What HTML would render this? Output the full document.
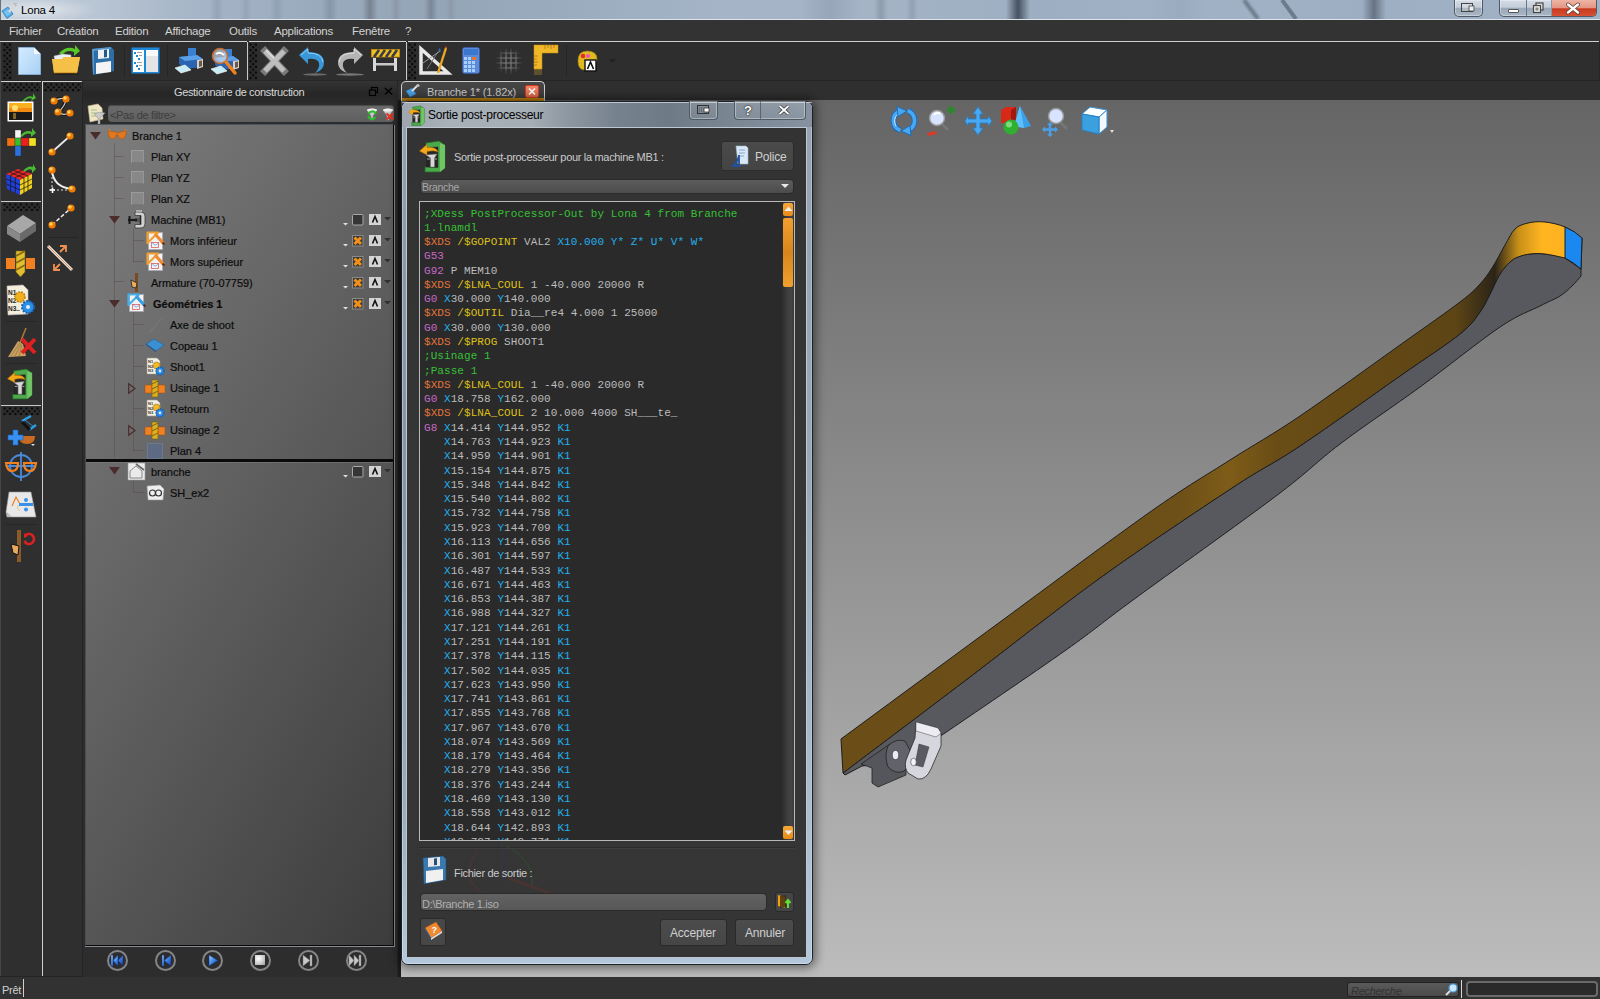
<!DOCTYPE html><html><head><meta charset="utf-8"><style>
*{margin:0;padding:0;box-sizing:border-box}
html,body{width:1600px;height:999px;overflow:hidden;background:#2f2f2f;font-family:"Liberation Sans",sans-serif;font-size:11px;color:#ccc}
.a{position:absolute}
svg{position:absolute;overflow:visible}
.t{position:absolute;white-space:nowrap;letter-spacing:-0.35px;line-height:13px;margin-top:1px}
#title{left:0;top:0;width:1600px;height:20px;background:linear-gradient(90deg,#c4ced9 0%,#b8c5d3 6%,#a6b5c7 12%,#9aaabd 20%,#95a5b8 28%,#9cacbf 36%,#a5b4c7 45%,#a4b3c6 55%,#9eaec2 65%,#a2b2c6 75%,#9daec3 85%,#a2b2c6 100%)}
#menu{left:0;top:20px;width:1600px;height:21px;background:#333}
#tb{left:0;top:42px;width:1600px;height:39px;background:#2e2e2e}
#vp{left:400px;top:100px;width:1200px;height:877px;background:linear-gradient(180deg,#656565 0%,#bcbcbc 100%)}
#status{left:0;top:977px;width:1600px;height:22px;background:#323232}
.mono{font-family:"Liberation Mono",monospace;font-size:11px;letter-spacing:0.07px}
.grip{background-image:radial-gradient(circle at 50% 50%,#080808 1px,transparent 1.6px),radial-gradient(circle at 50% 50%,#080808 1px,transparent 1.6px);background-size:5.5px 5.6px;background-position:-1.25px -1.3px,1.5px 1.5px}
</style></head><body>
<div id="title" class="a"></div>
<div class="a" style="left:210px;top:0;width:14px;height:19px;background:linear-gradient(90deg,transparent,rgba(120,135,155,.35),transparent)"></div>
<div class="a" style="left:240px;top:0;width:12px;height:19px;background:linear-gradient(90deg,transparent,rgba(120,135,155,.3),transparent)"></div>
<div class="a" style="left:270px;top:0;width:14px;height:19px;background:linear-gradient(90deg,transparent,rgba(120,135,155,.35),transparent)"></div>
<div class="a" style="left:322px;top:0;width:16px;height:19px;background:linear-gradient(90deg,transparent,rgba(110,125,145,.45),transparent)"></div>
<div class="a" style="left:362px;top:0;width:16px;height:19px;background:linear-gradient(90deg,transparent,rgba(100,105,115,.6),transparent)"></div>
<div class="a" style="left:390px;top:0;width:12px;height:19px;background:linear-gradient(90deg,transparent,rgba(120,130,145,.4),transparent)"></div>
<div class="a" style="left:424px;top:0;width:14px;height:19px;background:linear-gradient(90deg,transparent,rgba(100,110,125,.55),transparent)"></div>
<div class="a" style="left:446px;top:0;width:10px;height:19px;background:linear-gradient(90deg,transparent,rgba(120,130,145,.35),transparent)"></div>
<div class="a" style="left:800px;top:0;width:60px;height:19px;background:linear-gradient(90deg,transparent,rgba(120,135,155,.3),transparent)"></div>
<div class="a" style="left:874px;top:0;width:14px;height:19px;background:linear-gradient(90deg,transparent,rgba(110,120,135,.4),transparent)"></div>
<div class="a" style="left:906px;top:0;width:12px;height:19px;background:linear-gradient(90deg,transparent,rgba(120,130,145,.35),transparent)"></div>
<div class="a" style="left:1006px;top:0;width:24px;height:19px;background:linear-gradient(90deg,transparent,rgba(55,65,80,.85),transparent)"></div>
<div class="a" style="left:1362px;top:0;width:24px;height:19px;background:linear-gradient(90deg,transparent,rgba(80,90,105,.7),transparent)"></div>
<div class="a" style="left:1150px;top:0;width:60px;height:19px;background:linear-gradient(90deg,transparent,rgba(130,145,165,.2),transparent)"></div>
<svg style="left:1236px;top:0" width="70" height="19"><path d="M8 0 L22 19" stroke="rgba(70,80,95,.55)" stroke-width="4" filter="blur(0.8px)"/><path d="M46 0 L60 19" stroke="rgba(70,80,95,.55)" stroke-width="4"/></svg>
<div class="a" style="left:0;top:19px;width:1600px;height:1px;background:#dde4ec"></div>
<div class="a" style="left:0;top:0;width:120px;height:19px;background:radial-gradient(ellipse 60px 12px at 38px 10px,rgba(235,238,242,.75),rgba(235,238,242,0))"></div>
<div class="a" style="left:0;top:0;width:1px;height:20px;background:#6a7078"></div>
<div class="t" style="left:21px;top:3px;color:#000;font-size:11.5px;letter-spacing:-0.2px">Lona 4</div>
<svg style="left:1px;top:2px" width="17" height="17"><path d="M1 9 L7 5 L12 12 L6 16.5 Z" fill="#58b0e8" stroke="#2a78b8" stroke-width="0.8"/><path d="M3 10 L7 7 L10 11 L6 14 Z" fill="#90d0f8" opacity=".6"/><path d="M8 10 L14 3" stroke="#d8d8d8" stroke-width="2.6"/><path d="M12 1 L16 1 L15 5 Z" fill="#bbb"/></svg>
<div class="a" style="left:1454px;top:0;width:29px;height:17px;border:1px solid #505a66;border-top:none;border-radius:0 0 5px 5px;background:linear-gradient(#d4dce6 0%,#c4ced8 45%,#9aa8b8 52%,#a8b6c6 100%);box-shadow:inset 0 0 0 1px rgba(255,255,255,.35)"></div>
<svg style="left:1461px;top:3px" width="16" height="11"><rect x="0.5" y="0.5" width="11" height="8" fill="rgba(255,255,255,.2)" stroke="#444" stroke-width="1"/><rect x="8" y="3" width="5" height="5" fill="#eee" stroke="#444" stroke-width="0.8"/></svg>
<div class="a" style="left:1499px;top:0;width:98px;height:17px;border:1px solid #505a66;border-top:none;border-radius:0 0 5px 5px;overflow:hidden;background:linear-gradient(#d4dce6 0%,#c4ced8 45%,#9aa8b8 52%,#a8b6c6 100%);box-shadow:inset 0 0 0 1px rgba(255,255,255,.35)"><div class="a" style="left:26px;top:0;width:1px;height:17px;background:#6a7888"></div><div class="a" style="left:51px;top:0;width:1px;height:17px;background:#8a98a8"></div><div class="a" style="left:52px;top:0;width:46px;height:17px;background:linear-gradient(#eeb4a4 0%,#e49684 45%,#c83a22 52%,#d85434 100%)"></div></div>
<div class="a" style="left:1508px;top:9px;width:11px;height:4px;background:#fff;border:1px solid #555;border-radius:1px"></div>
<svg style="left:1532px;top:2px" width="13" height="12"><rect x="4" y="1" width="7" height="7" fill="#e8e8e8" stroke="#444" stroke-width="1.2"/><rect x="1.5" y="3.5" width="7" height="7" fill="#e8e8e8" stroke="#444" stroke-width="1.2"/><rect x="3.5" y="5.5" width="3" height="3" fill="#888"/></svg>
<svg style="left:1565px;top:3px" width="16" height="11"><path d="M3 1.5 L13 9.5 M13 1.5 L3 9.5" stroke="#5a3a30" stroke-width="4" stroke-linecap="round"/><path d="M3 1.5 L13 9.5 M13 1.5 L3 9.5" stroke="#fff" stroke-width="2.4" stroke-linecap="round"/></svg>
<div id="menu" class="a"></div>
<div class="t" style="left:9px;top:24px;color:#d2d2d2;font-size:11.5px;letter-spacing:-0.25px">Fichier</div>
<div class="t" style="left:57px;top:24px;color:#d2d2d2;font-size:11.5px;letter-spacing:-0.25px">Création</div>
<div class="t" style="left:115px;top:24px;color:#d2d2d2;font-size:11.5px;letter-spacing:-0.25px">Edition</div>
<div class="t" style="left:165px;top:24px;color:#d2d2d2;font-size:11.5px;letter-spacing:-0.25px">Affichage</div>
<div class="t" style="left:229px;top:24px;color:#d2d2d2;font-size:11.5px;letter-spacing:-0.25px">Outils</div>
<div class="t" style="left:274px;top:24px;color:#d2d2d2;font-size:11.5px;letter-spacing:-0.25px">Applications</div>
<div class="t" style="left:352px;top:24px;color:#d2d2d2;font-size:11.5px;letter-spacing:-0.25px">Fenêtre</div>
<div class="t" style="left:405px;top:24px;color:#d2d2d2;font-size:11.5px;letter-spacing:-0.25px">?</div>
<div class="a" style="left:0;top:41px;width:1599px;height:1px;background:#cfcfcf"></div>
<div id="tb" class="a"></div>
<div class="a" style="left:0;top:80px;width:1600px;height:1px;background:#262626"></div>
<div class="a" style="left:1599px;top:42px;width:1px;height:39px;background:#262626"></div>
<div class="a" style="left:0;top:42px;width:1px;height:935px;background:#454545"></div>
<div class="a grip" style="left:3px;top:43px;width:9px;height:37px"></div>
<div class="a" style="left:1px;top:81px;width:40px;height:1px;background:#d0d0d0"></div>
<div class="a" style="left:42px;top:81px;width:40px;height:1px;background:#d0d0d0"></div>
<div class="a" style="left:42px;top:81px;width:1px;height:895px;background:#d0d0d0"></div>
<div class="a" style="left:82px;top:82px;width:1px;height:894px;background:#242424"></div>
<div class="a" style="left:0;top:976px;width:83px;height:1px;background:#242424"></div>
<div class="a grip" style="left:3px;top:83px;width:37px;height:9px"></div>
<div class="a grip" style="left:44px;top:83px;width:37px;height:9px"></div>
<div class="a" style="left:83px;top:81px;width:315px;height:896px;background:#2d2d2d"></div>
<div class="a" style="left:83px;top:81px;width:315px;height:22px;background:linear-gradient(#343434,#262626 60%,#2b2b2b)"></div>
<div class="a" style="left:397px;top:81px;width:1px;height:896px;background:#262626"></div>
<div class="t" style="left:174px;top:85px;color:#d8d8d8">Gestionnaire de construction</div>
<svg style="left:369px;top:87px" width="9" height="9"><rect x="2.5" y="0.5" width="6" height="5" fill="none" stroke="#000" stroke-width="1.2"/><rect x="0.5" y="3" width="6" height="5.5" fill="#2a2a2a" stroke="#000" stroke-width="1.2"/></svg>
<svg style="left:384px;top:87px" width="9" height="8"><path d="M1 1 L8 7.5 M8 1 L1 7.5" stroke="#000" stroke-width="1.4"/></svg>
<svg style="left:87px;top:103px" width="19" height="21"><path d="M1 3 L11 1 L15 5 L16 16 L3 19 Z" fill="#f0e6c4" stroke="#c8b890" stroke-width="0.6"/><path d="M4 7h6M4 10h6M4 13h6" stroke="#8ab878" stroke-width="0.8"/><path d="M7 11 Q12 8 18 10 L13 15 L13 21 L11 21 L11 15 Z" fill="#c8c8c8" stroke="#888" stroke-width="0.5"/></svg>
<div class="a" style="left:108px;top:105px;width:286px;height:17px;border-radius:4px;background:linear-gradient(#6c6c6c,#5e5e5e);box-shadow:inset 0 1px 1px #4a4a4a"></div>
<div class="t" style="left:110px;top:108px;color:#3e3e3e">&lt;Pas de filtre&gt;</div>
<svg style="left:366px;top:107px" width="12" height="14"><path d="M1 3 Q6 0 11 3 L7 9 L7 13 L5 13 L5 9 Z" fill="#c8c8c8" stroke="#888" stroke-width="0.5"/><ellipse cx="6" cy="3" rx="5" ry="1.6" fill="#f0f0f0"/><path d="M2.5 7 A4 4 0 0 1 9.5 6" stroke="#28c028" stroke-width="2" fill="none"/><path d="M9.5 10 A4 4 0 0 1 2.5 10" stroke="#28c028" stroke-width="2" fill="none"/><path d="M8 4 L11 6 L8.5 8 Z M4 12 L1 10 L3.5 8 Z" fill="#28c028"/></svg>
<svg style="left:382px;top:107px" width="12" height="14"><path d="M1 3 Q6 0 11 3 L7 9 L7 13 L5 13 L5 9 Z" fill="#c8c8c8" stroke="#888" stroke-width="0.5"/><ellipse cx="6" cy="3" rx="5" ry="1.6" fill="#f0f0f0"/><path d="M4.5 6.5 L11 12.5 M11 6.5 L4.5 12.5" stroke="#e83020" stroke-width="2"/></svg>
<div class="a" style="left:85px;top:124px;width:309px;height:822px;border:1px solid #080808;border-top-color:#4f555c;border-left-color:#4a4f55;background:linear-gradient(120deg,#7e7e7e 0%,#6a6a6a 30%,#555 62%,#3c3c3c 100%)"></div>
<div class="a" style="left:86px;top:459px;width:307px;height:3px;background:#0a0a0a"></div>
<div class="a" style="left:86px;top:462px;width:307px;height:1px;background:#8a8a8a;opacity:.4"></div>
<div class="a" style="left:85px;top:946px;width:310px;height:1px;background:#868a92"></div>
<div class="a" style="left:394px;top:125px;width:1px;height:822px;background:#868a92"></div>
<div class="a" style="left:107.2px;top:949.5px;width:21px;height:21px;border-radius:50%;border:2px solid #858585"></div>
<div class="a" style="left:155.2px;top:949.5px;width:21px;height:21px;border-radius:50%;border:2px solid #858585"></div>
<div class="a" style="left:202.3px;top:949.5px;width:21px;height:21px;border-radius:50%;border:2px solid #858585"></div>
<div class="a" style="left:249.8px;top:949.5px;width:21px;height:21px;border-radius:50%;border:2px solid #858585"></div>
<div class="a" style="left:297.8px;top:949.5px;width:21px;height:21px;border-radius:50%;border:2px solid #858585"></div>
<div class="a" style="left:345.5px;top:949.5px;width:21px;height:21px;border-radius:50%;border:2px solid #858585"></div>
<svg style="left:109px;top:953px" width="17" height="15"><defs><linearGradient id="mb" x1="0" y1="0" x2="1" y2="1"><stop offset="0" stop-color="#a8d8ff"/><stop offset=".5" stop-color="#3a8ae8"/><stop offset="1" stop-color="#1a3aa0"/></linearGradient></defs><path d="M2 2 L4 2 L4 13 L2 13 Z M4 7.5 L9 2 L9 13 Z M9 7.5 L14 2 L14 13 Z" fill="url(#mb)" stroke="#1a2a80" stroke-width="0.5"/></svg>
<svg style="left:160px;top:953px" width="13" height="15"><path d="M2 2 L4 2 L4 13 L2 13 Z M4 7.5 L11 2 L11 13 Z" fill="url(#mb)" stroke="#1a2a80" stroke-width="0.5"/></svg>
<svg style="left:207px;top:954px" width="13" height="13"><path d="M2 1 L11 6.5 L2 12 Z" fill="url(#mb)" stroke="#1a2a80" stroke-width="0.5"/></svg>
<div class="a" style="left:255px;top:955px;width:10px;height:10px;background:radial-gradient(circle at 35% 35%,#fff,#c8c8c8 60%,#9a9a9a)"></div>
<svg style="left:302px;top:953px" width="13" height="15"><path d="M1 2 L8 7.5 L1 13 Z M8 2 L10 2 L10 13 L8 13 Z" fill="#c8c8c8" stroke="#777" stroke-width="0.5"/></svg>
<svg style="left:348px;top:953px" width="17" height="15"><path d="M1 2 L6 7.5 L1 13 Z M6 2 L11 7.5 L6 13 Z M11 2 L13 2 L13 13 L11 13 Z" fill="#c8c8c8" stroke="#777" stroke-width="0.5"/></svg>
<div class="a" style="left:114px;top:143px;width:1px;height:315px;background:rgba(90,70,70,.45)"></div>
<div class="a" style="left:133px;top:228px;width:1px;height:34px;background:rgba(90,70,70,.45)"></div>
<div class="a" style="left:133px;top:312px;width:1px;height:140px;background:rgba(90,70,70,.45)"></div>
<div class="a" style="left:133px;top:480px;width:1px;height:13px;background:rgba(90,70,70,.45)"></div>
<div class="a" style="left:114px;top:156px;width:10px;height:1px;background:rgba(90,70,70,.45)"></div>
<div class="a" style="left:114px;top:177px;width:10px;height:1px;background:rgba(90,70,70,.45)"></div>
<div class="a" style="left:114px;top:198px;width:10px;height:1px;background:rgba(90,70,70,.45)"></div>
<div class="a" style="left:114px;top:281px;width:10px;height:1px;background:rgba(90,70,70,.45)"></div>
<div class="a" style="left:133px;top:240px;width:11px;height:1px;background:rgba(90,70,70,.45)"></div>
<div class="a" style="left:133px;top:261px;width:11px;height:1px;background:rgba(90,70,70,.45)"></div>
<div class="a" style="left:133px;top:324px;width:11px;height:1px;background:rgba(90,70,70,.45)"></div>
<div class="a" style="left:133px;top:345px;width:11px;height:1px;background:rgba(90,70,70,.45)"></div>
<div class="a" style="left:133px;top:366px;width:11px;height:1px;background:rgba(90,70,70,.45)"></div>
<div class="a" style="left:133px;top:408px;width:11px;height:1px;background:rgba(90,70,70,.45)"></div>
<div class="a" style="left:133px;top:450px;width:11px;height:1px;background:rgba(90,70,70,.45)"></div>
<div class="a" style="left:133px;top:492px;width:11px;height:1px;background:rgba(90,70,70,.45)"></div>
<svg style="left:90px;top:132px" width="12" height="8"><path d="M0 0 L11 0 L5.5 7.5 Z" fill="#4a2c2c"/></svg>
<svg style="left:107px;top:129px" width="20" height="13"><path d="M1 4 Q0 2 3 2 L9 3 L11 4 L13 3 L18 2 Q20 2 19 5 Q18 10 14 10 Q11 10 11 6 L9 6 Q9 10 5 10 Q2 10 1 4 Z" fill="#e07820" stroke="#b05010" stroke-width="0.6"/><path d="M3 2 L2 0 M18 2 L19 0" stroke="#e07820" stroke-width="1.2"/></svg>
<div class="t" style="left:132px;top:129px;color:#0c0c0c;-webkit-text-stroke:0.2px #0c0c0c;letter-spacing:-0.02px;">Branche 1</div>
<div class="a" style="left:131px;top:150px;width:13px;height:13px;background:#8a8a8a;border-top:1px solid #a0a0a0;border-left:1px solid #a0a0a0;border-right:1px solid #9a9a9a;border-bottom:1px solid #7a7a7a;opacity:.9"></div>
<div class="t" style="left:151px;top:150px;color:#0c0c0c;-webkit-text-stroke:0.2px #0c0c0c;letter-spacing:-0.02px;">Plan XY</div>
<div class="a" style="left:131px;top:171px;width:13px;height:13px;background:#8a8a8a;border-top:1px solid #a0a0a0;border-left:1px solid #a0a0a0;border-right:1px solid #9a9a9a;border-bottom:1px solid #7a7a7a;opacity:.9"></div>
<div class="t" style="left:151px;top:171px;color:#0c0c0c;-webkit-text-stroke:0.2px #0c0c0c;letter-spacing:-0.02px;">Plan YZ</div>
<div class="a" style="left:131px;top:192px;width:13px;height:13px;background:#8a8a8a;border-top:1px solid #a0a0a0;border-left:1px solid #a0a0a0;border-right:1px solid #9a9a9a;border-bottom:1px solid #7a7a7a;opacity:.9"></div>
<div class="t" style="left:151px;top:192px;color:#0c0c0c;-webkit-text-stroke:0.2px #0c0c0c;letter-spacing:-0.02px;">Plan XZ</div>
<svg style="left:109px;top:216px" width="12" height="8"><path d="M0 0 L11 0 L5.5 7.5 Z" fill="#4a2c2c"/></svg>
<svg style="left:127px;top:210px" width="19" height="20"><path d="M8 2 L14 2 Q18 2 18 6 L18 14 Q18 18 14 18 L8 18 L8 14.5 L13.5 14.5 L13.5 5.5 L8 5.5 Z" fill="#cfcfd2" stroke="#3a3a3a" stroke-width="0.8"/><path d="M13.5 5.5 L13.5 14.5" stroke="#222" stroke-width="1.6"/><rect x="8" y="8" width="5" height="4" fill="#555"/><path d="M1 10 L10 10" stroke="#1a1a1a" stroke-width="2.2"/><path d="M2.5 6 L2.5 14" stroke="#1a1a1a" stroke-width="2"/><path d="M9 1 L15 1" stroke="#eee" stroke-width="1"/></svg>
<div class="t" style="left:151px;top:213px;color:#0c0c0c;-webkit-text-stroke:0.2px #0c0c0c;letter-spacing:-0.02px;">Machine (MB1)</div>
<svg style="left:343px;top:223px" width="6" height="3"><path d="M0 0 L5 0 L2.5 2.5 Z" fill="#e0e0e0"/></svg>
<svg style="left:352px;top:214px" width="12" height="12"><rect x="0.5" y="0.5" width="10.5" height="10.5" rx="1" fill="#363636" stroke="#a8a8a8"/></svg>
<svg style="left:369px;top:214px" width="13" height="12"><rect x="0" y="0" width="12" height="11" fill="#d4d4d4"/><path d="M3.5 8.5 L6 2.5 L8.5 8.5" stroke="#111" stroke-width="1.6" fill="none"/></svg>
<svg style="left:384px;top:217px" width="8" height="5"><path d="M0 0 L7 0 L3.5 3.5 Z" fill="#303030"/></svg>
<svg style="left:146px;top:231px" width="20" height="20"><rect x="2.5" y="1.5" width="14" height="17" fill="#f2f2f4" stroke="#a8a8b0" stroke-width="0.8"/><path d="M6 11 Q9 17 13 11" stroke="#80b0e0" stroke-width="1" fill="none"/><rect x="5.5" y="11.5" width="7" height="5" fill="none" stroke="#d86060" stroke-width="0.8"/><path d="M1.5 1.5 L12 1.5 L1.5 12 Z" fill="none" stroke="#f0a030" stroke-width="2.2" stroke-linejoin="round"/><path d="M3.5 3.5 L8 3.5 L3.5 8 Z" fill="#f8f0e0" opacity=".6"/><path d="M9 3 L17.5 12.5" stroke="#f08a30" stroke-width="3.2"/><path d="M16.5 11.5 L18.5 13.5" stroke="#603010" stroke-width="2"/></svg>
<div class="t" style="left:170px;top:234px;color:#0c0c0c;-webkit-text-stroke:0.2px #0c0c0c;letter-spacing:-0.02px;">Mors inférieur</div>
<svg style="left:343px;top:244px" width="6" height="3"><path d="M0 0 L5 0 L2.5 2.5 Z" fill="#e0e0e0"/></svg>
<svg style="left:352px;top:235px" width="12" height="12"><rect x="0.5" y="0.5" width="10.5" height="10.5" fill="#3a3a3a" stroke="#8a8a8a"/><path d="M2.5 2.5 L9 9 M9 2.5 L2.5 9" stroke="#f0901a" stroke-width="3"/></svg>
<svg style="left:369px;top:235px" width="13" height="12"><rect x="0" y="0" width="12" height="11" fill="#d4d4d4"/><path d="M3.5 8.5 L6 2.5 L8.5 8.5" stroke="#111" stroke-width="1.6" fill="none"/></svg>
<svg style="left:384px;top:238px" width="8" height="5"><path d="M0 0 L7 0 L3.5 3.5 Z" fill="#303030"/></svg>
<svg style="left:146px;top:252px" width="20" height="20"><rect x="2.5" y="1.5" width="14" height="17" fill="#f2f2f4" stroke="#a8a8b0" stroke-width="0.8"/><path d="M6 11 Q9 17 13 11" stroke="#80b0e0" stroke-width="1" fill="none"/><rect x="5.5" y="11.5" width="7" height="5" fill="none" stroke="#d86060" stroke-width="0.8"/><path d="M1.5 1.5 L12 1.5 L1.5 12 Z" fill="none" stroke="#f0a030" stroke-width="2.2" stroke-linejoin="round"/><path d="M3.5 3.5 L8 3.5 L3.5 8 Z" fill="#f8f0e0" opacity=".6"/><path d="M9 3 L17.5 12.5" stroke="#f08a30" stroke-width="3.2"/><path d="M16.5 11.5 L18.5 13.5" stroke="#603010" stroke-width="2"/></svg>
<div class="t" style="left:170px;top:255px;color:#0c0c0c;-webkit-text-stroke:0.2px #0c0c0c;letter-spacing:-0.02px;">Mors supérieur</div>
<svg style="left:343px;top:265px" width="6" height="3"><path d="M0 0 L5 0 L2.5 2.5 Z" fill="#e0e0e0"/></svg>
<svg style="left:352px;top:256px" width="12" height="12"><rect x="0.5" y="0.5" width="10.5" height="10.5" fill="#3a3a3a" stroke="#8a8a8a"/><path d="M2.5 2.5 L9 9 M9 2.5 L2.5 9" stroke="#f0901a" stroke-width="3"/></svg>
<svg style="left:369px;top:256px" width="13" height="12"><rect x="0" y="0" width="12" height="11" fill="#d4d4d4"/><path d="M3.5 8.5 L6 2.5 L8.5 8.5" stroke="#111" stroke-width="1.6" fill="none"/></svg>
<svg style="left:384px;top:259px" width="8" height="5"><path d="M0 0 L7 0 L3.5 3.5 Z" fill="#303030"/></svg>
<svg style="left:128px;top:273px" width="16" height="19"><rect x="7" y="0" width="3" height="19" fill="#7a4a20"/><path d="M3 7 L9 10 L8 15 L4 14 Z" fill="#e8b060" stroke="#222" stroke-width="0.8"/></svg>
<div class="t" style="left:151px;top:276px;color:#0c0c0c;-webkit-text-stroke:0.2px #0c0c0c;letter-spacing:-0.02px;">Armature (70-07759)</div>
<svg style="left:343px;top:286px" width="6" height="3"><path d="M0 0 L5 0 L2.5 2.5 Z" fill="#e0e0e0"/></svg>
<svg style="left:352px;top:277px" width="12" height="12"><rect x="0.5" y="0.5" width="10.5" height="10.5" fill="#3a3a3a" stroke="#8a8a8a"/><path d="M2.5 2.5 L9 9 M9 2.5 L2.5 9" stroke="#f0901a" stroke-width="3"/></svg>
<svg style="left:369px;top:277px" width="13" height="12"><rect x="0" y="0" width="12" height="11" fill="#d4d4d4"/><path d="M3.5 8.5 L6 2.5 L8.5 8.5" stroke="#111" stroke-width="1.6" fill="none"/></svg>
<svg style="left:384px;top:280px" width="8" height="5"><path d="M0 0 L7 0 L3.5 3.5 Z" fill="#303030"/></svg>
<svg style="left:109px;top:300px" width="12" height="8"><path d="M0 0 L11 0 L5.5 7.5 Z" fill="#4a2c2c"/></svg>
<svg style="left:127px;top:293px" width="20" height="20"><rect x="2.5" y="1.5" width="14" height="17" fill="#f2f2f4" stroke="#a8a8b0" stroke-width="0.8"/><path d="M6 11 Q9 17 13 11" stroke="#80b0e0" stroke-width="1" fill="none"/><rect x="5.5" y="11.5" width="7" height="5" fill="none" stroke="#d86060" stroke-width="0.8"/><path d="M1.5 1.5 L12 1.5 L1.5 12 Z" fill="none" stroke="#48b0e8" stroke-width="2.2" stroke-linejoin="round"/><path d="M3.5 3.5 L8 3.5 L3.5 8 Z" fill="#f8f0e0" opacity=".6"/><path d="M9 3 L17.5 12.5" stroke="#38a0e0" stroke-width="3.2"/><path d="M16.5 11.5 L18.5 13.5" stroke="#603010" stroke-width="2"/></svg>
<div class="t" style="left:153px;top:297px;color:#0c0c0c;-webkit-text-stroke:0.2px #0c0c0c;letter-spacing:-0.02px;font-weight:bold;">Géométries 1</div>
<svg style="left:343px;top:307px" width="6" height="3"><path d="M0 0 L5 0 L2.5 2.5 Z" fill="#e0e0e0"/></svg>
<svg style="left:352px;top:298px" width="12" height="12"><rect x="0.5" y="0.5" width="10.5" height="10.5" fill="#3a3a3a" stroke="#8a8a8a"/><path d="M2.5 2.5 L9 9 M9 2.5 L2.5 9" stroke="#f0901a" stroke-width="3"/></svg>
<svg style="left:369px;top:298px" width="13" height="12"><rect x="0" y="0" width="12" height="11" fill="#d4d4d4"/><path d="M3.5 8.5 L6 2.5 L8.5 8.5" stroke="#111" stroke-width="1.6" fill="none"/></svg>
<svg style="left:384px;top:301px" width="8" height="5"><path d="M0 0 L7 0 L3.5 3.5 Z" fill="#303030"/></svg>
<svg style="left:148px;top:316px" width="16" height="18"><path d="M1 17 L15 1" stroke="#8a8a8a" stroke-width="0.8" opacity=".6"/></svg>
<div class="t" style="left:170px;top:318px;color:#0c0c0c;-webkit-text-stroke:0.2px #0c0c0c;letter-spacing:-0.02px;">Axe de shoot</div>
<svg style="left:145px;top:338px" width="20" height="15"><path d="M1 6 L9 1 L19 7 L11 13 Z" fill="#3a90d0" stroke="#2060a0" stroke-width="0.6"/><path d="M1 6 L11 13 L11 14 L1 7 Z" fill="#1a5090"/></svg>
<div class="t" style="left:170px;top:339px;color:#0c0c0c;-webkit-text-stroke:0.2px #0c0c0c;letter-spacing:-0.02px;">Copeau 1</div>
<svg style="left:146px;top:357px" width="19" height="19"><path d="M1 1 L11 1 L14 4 L14 17 L1 17 Z" fill="#f4f0e0" stroke="#999" stroke-width="0.6"/><text x="2" y="6" font-family="Liberation Sans" font-size="4" font-weight="bold" fill="#333">N1</text><text x="2" y="10.5" font-family="Liberation Sans" font-size="4" font-weight="bold" fill="#333">N2</text><text x="2" y="15" font-family="Liberation Sans" font-size="4" font-weight="bold" fill="#333">N3</text><circle cx="10.5" cy="8.5" r="3.3" fill="#f4b828" stroke="#b07810" stroke-width="1.2" stroke-dasharray="1.2 0.8"/><circle cx="14" cy="14" r="4" fill="#2a8ae0" stroke="#1060b0" stroke-width="1.4" stroke-dasharray="1.4 0.9"/><circle cx="14" cy="14" r="1.4" fill="#dde"/></svg>
<div class="t" style="left:170px;top:360px;color:#0c0c0c;-webkit-text-stroke:0.2px #0c0c0c;letter-spacing:-0.02px;">Shoot1</div>
<svg style="left:128px;top:383px" width="8" height="11"><path d="M0.7 0.7 L7 5.5 L0.7 10.3 Z" fill="none" stroke="#4a2c2c" stroke-width="1.2"/></svg>
<svg style="left:145px;top:379px" width="20" height="19"><rect x="0" y="6" width="7" height="8" fill="#f08020" stroke="#a05010" stroke-width="0.5"/><rect x="13" y="6" width="7" height="8" fill="#f08020" stroke="#a05010" stroke-width="0.5"/><path d="M7 1 L13 1 L13 18 L7 18 Z" fill="#d8b020" stroke="#806010" stroke-width="0.6"/><path d="M7 5 L13 2 M7 10 L13 7 M7 15 L13 12" stroke="#806010" stroke-width="1"/></svg>
<div class="t" style="left:170px;top:381px;color:#0c0c0c;-webkit-text-stroke:0.2px #0c0c0c;letter-spacing:-0.02px;">Usinage 1</div>
<svg style="left:146px;top:399px" width="19" height="19"><path d="M1 1 L11 1 L14 4 L14 17 L1 17 Z" fill="#f4f0e0" stroke="#999" stroke-width="0.6"/><text x="2" y="6" font-family="Liberation Sans" font-size="4" font-weight="bold" fill="#333">N1</text><text x="2" y="10.5" font-family="Liberation Sans" font-size="4" font-weight="bold" fill="#333">N2</text><text x="2" y="15" font-family="Liberation Sans" font-size="4" font-weight="bold" fill="#333">N3</text><circle cx="10.5" cy="8.5" r="3.3" fill="#f4b828" stroke="#b07810" stroke-width="1.2" stroke-dasharray="1.2 0.8"/><circle cx="14" cy="14" r="4" fill="#2a8ae0" stroke="#1060b0" stroke-width="1.4" stroke-dasharray="1.4 0.9"/><circle cx="14" cy="14" r="1.4" fill="#dde"/></svg>
<div class="t" style="left:170px;top:402px;color:#0c0c0c;-webkit-text-stroke:0.2px #0c0c0c;letter-spacing:-0.02px;">Retourn</div>
<svg style="left:128px;top:425px" width="8" height="11"><path d="M0.7 0.7 L7 5.5 L0.7 10.3 Z" fill="none" stroke="#4a2c2c" stroke-width="1.2"/></svg>
<svg style="left:145px;top:421px" width="20" height="19"><rect x="0" y="6" width="7" height="8" fill="#f08020" stroke="#a05010" stroke-width="0.5"/><rect x="13" y="6" width="7" height="8" fill="#f08020" stroke="#a05010" stroke-width="0.5"/><path d="M7 1 L13 1 L13 18 L7 18 Z" fill="#d8b020" stroke="#806010" stroke-width="0.6"/><path d="M7 5 L13 2 M7 10 L13 7 M7 15 L13 12" stroke="#806010" stroke-width="1"/></svg>
<div class="t" style="left:170px;top:423px;color:#0c0c0c;-webkit-text-stroke:0.2px #0c0c0c;letter-spacing:-0.02px;">Usinage 2</div>
<div class="a" style="left:147px;top:443px;width:16px;height:16px;background:#5a6c90;border:1px solid #7080a0;opacity:.7"></div>
<div class="t" style="left:170px;top:444px;color:#0c0c0c;-webkit-text-stroke:0.2px #0c0c0c;letter-spacing:-0.02px;">Plan 4</div>
<svg style="left:109px;top:467px" width="12" height="8"><path d="M0 0 L11 0 L5.5 7.5 Z" fill="#4a2c2c"/></svg>
<svg style="left:127px;top:462px" width="19" height="19"><rect x="1" y="1" width="17" height="17" fill="#eaeaea" stroke="#999" stroke-width="0.6"/><path d="M3 9 L9 4 L15 9 L15 16 L3 16 Z" fill="none" stroke="#888" stroke-width="1"/><path d="M9 2 L17 8" stroke="#666" stroke-width="1.6"/></svg>
<div class="t" style="left:151px;top:465px;color:#0c0c0c;-webkit-text-stroke:0.2px #0c0c0c;letter-spacing:-0.02px;">branche</div>
<svg style="left:343px;top:475px" width="6" height="3"><path d="M0 0 L5 0 L2.5 2.5 Z" fill="#e0e0e0"/></svg>
<svg style="left:352px;top:466px" width="12" height="12"><rect x="0.5" y="0.5" width="10.5" height="10.5" rx="1" fill="#363636" stroke="#a8a8a8"/></svg>
<svg style="left:369px;top:466px" width="13" height="12"><rect x="0" y="0" width="12" height="11" fill="#d4d4d4"/><path d="M3.5 8.5 L6 2.5 L8.5 8.5" stroke="#111" stroke-width="1.6" fill="none"/></svg>
<svg style="left:384px;top:469px" width="8" height="5"><path d="M0 0 L7 0 L3.5 3.5 Z" fill="#303030"/></svg>
<svg style="left:146px;top:484px" width="19" height="17"><path d="M1 2 L14 1 L18 5 L17 16 L2 16 Z" fill="#eee" stroke="#999" stroke-width="0.6"/><circle cx="6.5" cy="9" r="3" fill="none" stroke="#333" stroke-width="1.2"/><circle cx="12.5" cy="9" r="3" fill="none" stroke="#333" stroke-width="1.2"/></svg>
<div class="t" style="left:170px;top:486px;color:#0c0c0c;-webkit-text-stroke:0.2px #0c0c0c;letter-spacing:-0.02px;">SH_ex2</div>
<div id="vp" class="a"></div>
<div class="a" style="left:398px;top:100px;width:3px;height:877px;background:#1c1c1c"></div>
<div class="a" style="left:400px;top:81px;width:1200px;height:19px;background:#2f2f2f"></div>
<div class="a" style="left:401px;top:81px;width:144px;height:20px;border:1px solid #cfcfcf;border-bottom:none;border-radius:5px 5px 0 0;background:linear-gradient(#464646,#3c3c3c)"></div>
<div class="a" style="left:402px;top:98px;width:142px;height:3px;background:linear-gradient(#c88810,#b07808)"></div>
<svg style="left:405px;top:83px" width="15" height="15"><path d="M1 8 L7 5 L11 11 L5 14 Z" fill="#4aa0e0" stroke="#2a70b0" stroke-width="0.6"/><path d="M7 8 L13 2" stroke="#ddd" stroke-width="2"/><circle cx="13" cy="2.5" r="1.6" fill="#bbb"/></svg>
<div class="t" style="left:427px;top:85px;color:#c8c8c8;letter-spacing:-0.15px">Branche 1* (1.82x)</div>
<div class="a" style="left:525px;top:85px;width:14px;height:13px;border-radius:2px;background:linear-gradient(#f08868,#e06848);border:1px solid #d83820"></div>
<svg style="left:528px;top:88px" width="8" height="7"><path d="M1 0.5 L7 6.5 M7 0.5 L1 6.5" stroke="#fff" stroke-width="1.6"/></svg>
<svg style="left:890px;top:106px" width="28" height="30"><g fill="none" stroke-linecap="butt"><path d="M10.4 24.4 A10.5 10.5 0 0 1 9.5 5" stroke="#1a6cc0" stroke-width="5.6"/><path d="M17.6 4.6 A10.5 10.5 0 0 1 18.5 24" stroke="#1a6cc0" stroke-width="5.6"/><path d="M10.4 24.4 A10.5 10.5 0 0 1 9.5 5" stroke="#4aa8f0" stroke-width="3.6"/><path d="M17.6 4.6 A10.5 10.5 0 0 1 18.5 24" stroke="#4aa8f0" stroke-width="3.6"/><path d="M6 20 A9 9 0 0 1 8 8" stroke="#c8e8ff" stroke-width="1"/></g><path d="M7 0.5 L17 5 L8 10.5 Z" fill="#4aa8f0" stroke="#1a6cc0" stroke-width="1"/><path d="M21 29.5 L11 25 L20 19.5 Z" fill="#4aa8f0" stroke="#1a6cc0" stroke-width="1"/></svg>
<svg style="left:926px;top:106px" width="31" height="30"><path d="M14 16 L22 24" stroke="#777" stroke-width="2.5"/><circle cx="11" cy="12" r="7.5" fill="#d8e4ff" stroke="#999" stroke-width="1.5"/><path d="M8 9 A4 4 0 0 1 14 8" stroke="#fff" stroke-width="2" fill="none"/><path d="M21 4h8M25 0v8" stroke="#2a8a2a" stroke-width="3.2"/><path d="M1 27 L10 25 L11 28 L2 30 Z" fill="#d83a28"/></svg>
<svg style="left:965px;top:106px" width="28" height="30"><path d="M13 1 L8 8 L11 8 L11 13 L3 13 L3 10 L0 15 L3 20 L3 17 L11 17 L11 22 L8 22 L13 29 L18 22 L15 22 L15 17 L23 17 L23 20 L27 15 L23 10 L23 13 L15 13 L15 8 L18 8 Z" fill="#4aa8f0" stroke="#2080d0" stroke-width="0.8"/></svg>
<svg style="left:1000px;top:106px" width="32" height="30"><path d="M1 4 L6 1 L16 1 L16 14 L11 17 L1 17 Z" fill="#d82818"/><path d="M11 4 L16 1 L16 14 L11 17 Z" fill="#a01810"/><path d="M20 0 L31 20 L24 22 L14 20 Z" fill="#3aa0e8"/><path d="M20 0 L24 22 L14 20 Z" fill="#60c0ff"/><circle cx="11" cy="21" r="7.5" fill="#30b030"/><circle cx="9" cy="18.5" r="3" fill="#a0f0a0" opacity=".7"/></svg>
<svg style="left:1043px;top:106px" width="30" height="30"><path d="M16 15 L24 23" stroke="#777" stroke-width="2.5"/><circle cx="13" cy="10" r="7.5" fill="#d8e4ff" stroke="#999" stroke-width="1.5"/><path d="M7 18 L7 29 M1.5 23.5 L12.5 23.5" stroke="#4aa0e8" stroke-width="2.4"/><path d="M7 16 L4 19 L10 19 Z M7 31 L4 28 L10 28 Z M-1 23.5 L2 20.5 L2 26.5 Z M15 23.5 L12 20.5 L12 26.5 Z" fill="#4aa0e8"/></svg>
<svg style="left:1081px;top:106px" width="32" height="31"><path d="M1 8 L9 1 L26 4 L18 11 Z" fill="#fff" stroke="#3a90d0" stroke-width="1"/><path d="M18 11 L26 4 L26 21 L18 28 Z" fill="#f4f8ff" stroke="#3a90d0" stroke-width="1"/><path d="M1 8 L18 11 L18 28 L1 24 Z" fill="#3aa0e0" stroke="#2a80c0" stroke-width="1"/><path d="M29 24 L33 24 L31 27 Z" fill="#ddd"/></svg>
<div class="a" style="left:401px;top:101px;width:412px;height:864px;border-radius:7px;box-shadow:0 0 10px 3px rgba(0,0,0,.45)"></div>
<div class="a" style="left:401px;top:101px;width:412px;height:864px;border-radius:7px;border:1px solid #1c2128;background:linear-gradient(180deg,#a8b0b9 0px,#a2abb5 22px,#94a0ac 27px,#8a98a6 180px,#8495a5 420px,#98aabc 700px,#b4c8dc 864px)"></div>
<div class="a" style="left:402px;top:102px;width:410px;height:862px;border-radius:6px;border:1px solid rgba(255,255,255,.35)"></div>
<div class="a" style="left:402px;top:102px;width:410px;height:25px;border-radius:6px 6px 0 0;background:linear-gradient(90deg,#9ea7b0 0%,#a8b0b8 12%,#a4acb4 32%,#8e98a2 40%,#76828e 52%,#6e7a86 65%,#7a8692 80%,#8692a0 100%)"></div>
<div class="a" style="left:402px;top:102px;width:410px;height:1px;border-radius:6px 6px 0 0;background:rgba(220,228,236,.7)"></div>
<svg style="left:408px;top:106px" width="17" height="20" viewBox="0 0 27 32"><path d="M7 2 L20 0 L26 4 L26 27 L21 31 L6 31 L6 26 L19 26.5 L19 6 L7 6.5 Z" fill="#4caa4c" stroke="#246a24" stroke-width="0.8"/><path d="M21 2 L26 4 L26 27 L21 31 Z" fill="#7ccc6c" opacity=".8"/><path d="M7 6.5 L19 6 L19 26.5 L7 26 Z" fill="#262626"/><path d="M7 14 L18 13 L15.5 17 L15.5 26 L11.5 26 L11.5 17 Z" fill="#d8d8d8" stroke="#777" stroke-width="0.5"/><path d="M8 18 L11 18 M16 18 L18 18" stroke="#aaa" stroke-width="1"/><path d="M0.5 10 L8 3.5 L8 6.5 Q17 5.5 19 11 Q15 9 8 10.5 L8 14 Z" fill="#f4a818" stroke="#b87008" stroke-width="0.5"/></svg>
<div class="t" style="left:428px;top:108px;color:#000;font-size:12px;letter-spacing:-0.25px">Sortie post-processeur</div>
<div class="a" style="left:689px;top:101px;width:29px;height:19px;border:1px solid #4e5a66;border-top:none;border-radius:0 0 4px 4px;background:linear-gradient(rgba(255,255,255,.12),rgba(255,255,255,.04));box-shadow:inset 0 0 0 1px rgba(255,255,255,.35)"></div>
<svg style="left:697px;top:105px" width="14" height="10"><rect x="0.5" y="0.5" width="11" height="8" fill="none" stroke="#333" stroke-width="1"/><rect x="7" y="3" width="5" height="4" fill="#fff" stroke="#333" stroke-width="0.8"/><path d="M2.5 2v5M4.5 2v5" stroke="#555" stroke-width="0.6"/></svg>
<div class="a" style="left:734px;top:101px;width:72px;height:19px;border:1px solid #4e5a66;border-top:none;border-radius:0 0 4px 4px;background:linear-gradient(rgba(255,255,255,.12),rgba(255,255,255,.04));box-shadow:inset 0 0 0 1px rgba(255,255,255,.35)"><div class="a" style="left:25px;top:0;width:1px;height:18px;background:rgba(60,70,80,.6)"></div></div>
<div class="t" style="left:744px;top:103px;color:#fff;font-weight:bold;font-size:13px;text-shadow:0 0 2px #222,0 0 1px #000">?</div>
<svg style="left:778px;top:105px" width="12" height="10"><path d="M1.5 1 L10.5 9 M10.5 1 L1.5 9" stroke="#333" stroke-width="3.2"/><path d="M1.5 1 L10.5 9 M10.5 1 L1.5 9" stroke="#fff" stroke-width="1.8"/></svg>
<div class="a" style="left:807px;top:128px;width:4px;height:830px;background:linear-gradient(180deg,#96a4b2 0%,#98a8b8 40%,#a8bacc 75%,#b4c8dc 100%)"></div>
<div class="a" style="left:406px;top:127px;width:401px;height:831px;background:#bdc8d3"></div>
<div class="a" style="left:407px;top:128px;width:399px;height:829px;background:linear-gradient(180deg,#333 0%,#363636 50%,#353535 100%)"></div>
<svg style="left:419px;top:141px" width="27" height="32" viewBox="0 0 27 32"><path d="M7 2 L20 0 L26 4 L26 27 L21 31 L6 31 L6 26 L19 26.5 L19 6 L7 6.5 Z" fill="#4caa4c" stroke="#246a24" stroke-width="0.8"/><path d="M21 2 L26 4 L26 27 L21 31 Z" fill="#7ccc6c" opacity=".8"/><path d="M7 6.5 L19 6 L19 26.5 L7 26 Z" fill="#262626"/><path d="M7 14 L18 13 L15.5 17 L15.5 26 L11.5 26 L11.5 17 Z" fill="#d8d8d8" stroke="#777" stroke-width="0.5"/><path d="M8 18 L11 18 M16 18 L18 18" stroke="#aaa" stroke-width="1"/><path d="M0.5 10 L8 3.5 L8 6.5 Q17 5.5 19 11 Q15 9 8 10.5 L8 14 Z" fill="#f4a818" stroke="#b87008" stroke-width="0.5"/></svg>
<div class="t" style="left:454px;top:150px;color:#cacaca;letter-spacing:-0.32px">Sortie post-processeur pour la machine MB1 :</div>
<div class="a" style="left:721px;top:141px;width:73px;height:30px;border-radius:3px;background:linear-gradient(#4a4a4a,#444);border:1px solid #2c2c2c"></div>
<svg style="left:731px;top:145px" width="20" height="23"><path d="M5 1 L15 1 L17 3 L17 19 L7 19 Z" fill="#d8e8f8" stroke="#a0b8d0" stroke-width="0.6"/><path d="M8 5h6M8 8h6M8 11h5" stroke="#8aa8c8" stroke-width="1"/><path d="M1 21 L10 21 M8 10 L8 22 M3 21 L8 12" stroke="#2050a0" stroke-width="1.8" fill="none"/></svg>
<div class="t" style="left:755px;top:150px;color:#d0d0d0;font-size:12px;letter-spacing:-0.2px">Police</div>
<div class="a" style="left:420px;top:179px;width:374px;height:15px;border-radius:4px;background:linear-gradient(#5c5c5c,#4c4c4c);border:1px solid #2a2a2a"></div>
<div class="t" style="left:422px;top:180px;color:#a8a8a8;font-size:10.5px;letter-spacing:-0.3px">Branche</div>
<svg style="left:781px;top:184px" width="9" height="6"><path d="M0 0 L8 0 L4 4 Z" fill="#e8e8e8"/></svg>
<div class="a" style="left:419px;top:201px;width:376px;height:640px;border:1px solid #b8b8b8;background:#2a2a2a"></div>
<div class="a" style="left:782px;top:202px;width:12px;height:638px;background:linear-gradient(90deg,#2c2c2c,#3c3c3c 40%,#444 75%,#3a3a3a)"></div>
<div class="a" style="left:783px;top:203px;width:10px;height:13px;border-radius:2px;background:linear-gradient(#f8a838,#e88a18)"></div>
<svg style="left:784px;top:206px" width="9" height="6"><path d="M0.5 5 L4.5 0.5 L8.5 5 Z" fill="#eee"/></svg>
<div class="a" style="left:783px;top:218px;width:10px;height:69px;border-radius:2px;background:linear-gradient(#f4a030,#d8861c 50%,#f4a030)"></div>
<div class="a" style="left:783px;top:826px;width:10px;height:13px;border-radius:2px;background:linear-gradient(#f8a838,#e88a18)"></div>
<svg style="left:784px;top:830px" width="9" height="6"><path d="M0.5 0.5 L4.5 5 L8.5 0.5 Z" fill="#eee"/></svg>
<div class="a" style="left:420px;top:202px;width:362px;height:638px;overflow:hidden">
<div class="mono a" style="left:4px;top:4.5px;line-height:14.2857px;white-space:pre"><span style="color:#36c036">;XDess PostProcessor-Out by Lona 4 from Branche</span>
<span style="color:#36c036">1.lnamdl</span>
<span style="color:#e4743a">$XDS </span><span style="color:#dec018">/$GOPOINT </span><span style="color:#bcbcbc">VAL2 </span><span style="color:#22b0ec">X10.000 Y* Z* U* V* W*</span>
<span style="color:#c868c8">G53</span>
<span style="color:#c868c8">G92 </span><span style="color:#bcbcbc">P MEM10</span>
<span style="color:#e4743a">$XDS </span><span style="color:#dec018">/$LNA_COUL </span><span style="color:#bcbcbc">1 -40.000 20000 R</span>
<span style="color:#c868c8">G0 </span><span style="color:#22b0ec">X</span><span style="color:#bcbcbc">30.000 </span><span style="color:#22b0ec">Y</span><span style="color:#bcbcbc">140.000</span>
<span style="color:#e4743a">$XDS </span><span style="color:#dec018">/$OUTIL </span><span style="color:#bcbcbc">Dia__re4 4.000 1 25000</span>
<span style="color:#c868c8">G0 </span><span style="color:#22b0ec">X</span><span style="color:#bcbcbc">30.000 </span><span style="color:#22b0ec">Y</span><span style="color:#bcbcbc">130.000</span>
<span style="color:#e4743a">$XDS </span><span style="color:#dec018">/$PROG </span><span style="color:#bcbcbc">SHOOT1</span>
<span style="color:#36c036">;Usinage 1</span>
<span style="color:#36c036">;Passe 1</span>
<span style="color:#e4743a">$XDS </span><span style="color:#dec018">/$LNA_COUL </span><span style="color:#bcbcbc">1 -40.000 20000 R</span>
<span style="color:#c868c8">G0 </span><span style="color:#22b0ec">X</span><span style="color:#bcbcbc">18.758 </span><span style="color:#22b0ec">Y</span><span style="color:#bcbcbc">162.000</span>
<span style="color:#e4743a">$XDS </span><span style="color:#dec018">/$LNA_COUL </span><span style="color:#bcbcbc">2 10.000 4000 SH___te_</span>
<span style="color:#c868c8">G8 </span><span style="color:#22b0ec">X</span><span style="color:#bcbcbc">14.414 </span><span style="color:#22b0ec">Y</span><span style="color:#bcbcbc">144.952</span><span style="color:#22b0ec"> K1</span>
   <span style="color:#22b0ec">X</span><span style="color:#bcbcbc">14.763 </span><span style="color:#22b0ec">Y</span><span style="color:#bcbcbc">144.923</span><span style="color:#22b0ec"> K1</span>
   <span style="color:#22b0ec">X</span><span style="color:#bcbcbc">14.959 </span><span style="color:#22b0ec">Y</span><span style="color:#bcbcbc">144.901</span><span style="color:#22b0ec"> K1</span>
   <span style="color:#22b0ec">X</span><span style="color:#bcbcbc">15.154 </span><span style="color:#22b0ec">Y</span><span style="color:#bcbcbc">144.875</span><span style="color:#22b0ec"> K1</span>
   <span style="color:#22b0ec">X</span><span style="color:#bcbcbc">15.348 </span><span style="color:#22b0ec">Y</span><span style="color:#bcbcbc">144.842</span><span style="color:#22b0ec"> K1</span>
   <span style="color:#22b0ec">X</span><span style="color:#bcbcbc">15.540 </span><span style="color:#22b0ec">Y</span><span style="color:#bcbcbc">144.802</span><span style="color:#22b0ec"> K1</span>
   <span style="color:#22b0ec">X</span><span style="color:#bcbcbc">15.732 </span><span style="color:#22b0ec">Y</span><span style="color:#bcbcbc">144.758</span><span style="color:#22b0ec"> K1</span>
   <span style="color:#22b0ec">X</span><span style="color:#bcbcbc">15.923 </span><span style="color:#22b0ec">Y</span><span style="color:#bcbcbc">144.709</span><span style="color:#22b0ec"> K1</span>
   <span style="color:#22b0ec">X</span><span style="color:#bcbcbc">16.113 </span><span style="color:#22b0ec">Y</span><span style="color:#bcbcbc">144.656</span><span style="color:#22b0ec"> K1</span>
   <span style="color:#22b0ec">X</span><span style="color:#bcbcbc">16.301 </span><span style="color:#22b0ec">Y</span><span style="color:#bcbcbc">144.597</span><span style="color:#22b0ec"> K1</span>
   <span style="color:#22b0ec">X</span><span style="color:#bcbcbc">16.487 </span><span style="color:#22b0ec">Y</span><span style="color:#bcbcbc">144.533</span><span style="color:#22b0ec"> K1</span>
   <span style="color:#22b0ec">X</span><span style="color:#bcbcbc">16.671 </span><span style="color:#22b0ec">Y</span><span style="color:#bcbcbc">144.463</span><span style="color:#22b0ec"> K1</span>
   <span style="color:#22b0ec">X</span><span style="color:#bcbcbc">16.853 </span><span style="color:#22b0ec">Y</span><span style="color:#bcbcbc">144.387</span><span style="color:#22b0ec"> K1</span>
   <span style="color:#22b0ec">X</span><span style="color:#bcbcbc">16.988 </span><span style="color:#22b0ec">Y</span><span style="color:#bcbcbc">144.327</span><span style="color:#22b0ec"> K1</span>
   <span style="color:#22b0ec">X</span><span style="color:#bcbcbc">17.121 </span><span style="color:#22b0ec">Y</span><span style="color:#bcbcbc">144.261</span><span style="color:#22b0ec"> K1</span>
   <span style="color:#22b0ec">X</span><span style="color:#bcbcbc">17.251 </span><span style="color:#22b0ec">Y</span><span style="color:#bcbcbc">144.191</span><span style="color:#22b0ec"> K1</span>
   <span style="color:#22b0ec">X</span><span style="color:#bcbcbc">17.378 </span><span style="color:#22b0ec">Y</span><span style="color:#bcbcbc">144.115</span><span style="color:#22b0ec"> K1</span>
   <span style="color:#22b0ec">X</span><span style="color:#bcbcbc">17.502 </span><span style="color:#22b0ec">Y</span><span style="color:#bcbcbc">144.035</span><span style="color:#22b0ec"> K1</span>
   <span style="color:#22b0ec">X</span><span style="color:#bcbcbc">17.623 </span><span style="color:#22b0ec">Y</span><span style="color:#bcbcbc">143.950</span><span style="color:#22b0ec"> K1</span>
   <span style="color:#22b0ec">X</span><span style="color:#bcbcbc">17.741 </span><span style="color:#22b0ec">Y</span><span style="color:#bcbcbc">143.861</span><span style="color:#22b0ec"> K1</span>
   <span style="color:#22b0ec">X</span><span style="color:#bcbcbc">17.855 </span><span style="color:#22b0ec">Y</span><span style="color:#bcbcbc">143.768</span><span style="color:#22b0ec"> K1</span>
   <span style="color:#22b0ec">X</span><span style="color:#bcbcbc">17.967 </span><span style="color:#22b0ec">Y</span><span style="color:#bcbcbc">143.670</span><span style="color:#22b0ec"> K1</span>
   <span style="color:#22b0ec">X</span><span style="color:#bcbcbc">18.074 </span><span style="color:#22b0ec">Y</span><span style="color:#bcbcbc">143.569</span><span style="color:#22b0ec"> K1</span>
   <span style="color:#22b0ec">X</span><span style="color:#bcbcbc">18.179 </span><span style="color:#22b0ec">Y</span><span style="color:#bcbcbc">143.464</span><span style="color:#22b0ec"> K1</span>
   <span style="color:#22b0ec">X</span><span style="color:#bcbcbc">18.279 </span><span style="color:#22b0ec">Y</span><span style="color:#bcbcbc">143.356</span><span style="color:#22b0ec"> K1</span>
   <span style="color:#22b0ec">X</span><span style="color:#bcbcbc">18.376 </span><span style="color:#22b0ec">Y</span><span style="color:#bcbcbc">143.244</span><span style="color:#22b0ec"> K1</span>
   <span style="color:#22b0ec">X</span><span style="color:#bcbcbc">18.469 </span><span style="color:#22b0ec">Y</span><span style="color:#bcbcbc">143.130</span><span style="color:#22b0ec"> K1</span>
   <span style="color:#22b0ec">X</span><span style="color:#bcbcbc">18.558 </span><span style="color:#22b0ec">Y</span><span style="color:#bcbcbc">143.012</span><span style="color:#22b0ec"> K1</span>
   <span style="color:#22b0ec">X</span><span style="color:#bcbcbc">18.644 </span><span style="color:#22b0ec">Y</span><span style="color:#bcbcbc">142.893</span><span style="color:#22b0ec"> K1</span>
   <span style="color:#22b0ec">X</span><span style="color:#bcbcbc">18.727 </span><span style="color:#22b0ec">Y</span><span style="color:#bcbcbc">142.771</span><span style="color:#22b0ec"> K1</span></div>
</div>
<div class="a" style="left:419px;top:847px;width:376px;height:1px;background:#2a2a2a"></div>
<svg style="left:460px;top:840px" width="120" height="70" opacity=".28"><path d="M42 1 V40" stroke="#3a3a6a" stroke-width="2"/><path d="M18 10 Q0 35 20 52" stroke="#7a3030" stroke-width="1.5" fill="none"/><path d="M46 6 Q75 20 72 48" stroke="#306a30" stroke-width="1.5" fill="none"/><path d="M48 38 L92 54" stroke="#7a3030" stroke-width="3"/><path d="M20 52 Q45 60 70 52" stroke="#3a3a6a" stroke-width="1.5" fill="none"/></svg>
<div class="a" style="left:419px;top:848px;width:376px;height:1px;background:#3e3e3e"></div>
<svg style="left:422px;top:856px" width="25" height="29"><path d="M1 2 L21 0 L24 3 L24 24 L2 28 Z" fill="#3a78b0" stroke="#24507a" stroke-width="0.6"/><path d="M6 2 L18 1 L18 10 L6 11 Z" fill="#e8e8e8"/><path d="M12 2.5 L15 2.3 L15 9 L12 9.3 Z" fill="#24507a"/><path d="M4 15 L21 13 L21 24 L4 27 Z" fill="#f0f0f0"/></svg>
<div class="t" style="left:454px;top:866px;color:#cacaca;letter-spacing:-0.32px">Fichier de sortie :</div>
<div class="a" style="left:420px;top:893px;width:347px;height:18px;border-radius:4px;background:linear-gradient(#626262,#575757);border:1px solid #2a2a2a"></div>
<div class="t" style="left:422px;top:897px;color:#b0b0b0;letter-spacing:-0.3px">D:\Branche 1.iso</div>
<div class="a" style="left:775px;top:892px;width:19px;height:20px;border-radius:3px;background:#454545;border:1px solid #2a2a2a"></div>
<svg style="left:777px;top:894px" width="16" height="15"><path d="M1 1 L8 3 L8 14 L1 12 Z" fill="#f0a010"/><path d="M3 2 L9 1 L9 13 L3 14 Z" fill="#3a2a10" opacity=".8"/><path d="M11 14 L11 7 M8.5 9 L11 6 L13.5 9" stroke="#60e030" stroke-width="2" fill="none"/></svg>
<div class="a" style="left:420px;top:918px;width:26px;height:28px;border-radius:3px;background:#474747;border:1px solid #2a2a2a"></div>
<svg style="left:423px;top:921px" width="21" height="22"><path d="M2 7 L13 1 L19 10 L8 17 Z" fill="#f08a30" stroke="#c05a10" stroke-width="0.6"/><path d="M2 7 L8 17 L8 19 L2 9 Z" fill="#1a5aa0"/><path d="M8 17 L19 10 L19 12 L8 19 Z" fill="#ddd"/><text x="8.5" y="12" font-family="Liberation Sans" font-size="9" font-weight="bold" fill="#fff">?</text></svg>
<div class="a" style="left:660px;top:919px;width:67px;height:27px;border-radius:3px;background:linear-gradient(#4c4c4c,#464646);border:1px solid #2a2a2a"></div>
<div class="t" style="left:670px;top:926px;color:#d0d0d0;font-size:12px;letter-spacing:-0.2px">Accepter</div>
<div class="a" style="left:735px;top:919px;width:59px;height:27px;border-radius:3px;background:linear-gradient(#4c4c4c,#464646);border:1px solid #2a2a2a"></div>
<div class="t" style="left:745px;top:926px;color:#d0d0d0;font-size:12px;letter-spacing:-0.2px">Annuler</div>
<div class="a" style="left:247px;top:41px;width:2px;height:40px;background:#2e2e2e"></div>
<div class="a" style="left:247px;top:42px;width:1px;height:38px;background:#c8c8c8"></div>
<div class="a" style="left:406px;top:41px;width:2px;height:40px;background:#2e2e2e"></div>
<div class="a" style="left:406px;top:42px;width:1px;height:38px;background:#c8c8c8"></div>
<div class="a grip" style="left:249px;top:43px;width:8px;height:37px"></div>
<div class="a grip" style="left:408px;top:43px;width:8px;height:37px"></div>
<div class="a" style="left:124px;top:45px;width:1px;height:32px;background:#262626"></div>
<div class="a" style="left:167px;top:45px;width:1px;height:32px;background:#262626"></div>
<div class="a" style="left:566px;top:45px;width:1px;height:32px;background:#262626"></div>
<svg style="left:18px;top:47px" width="23" height="28" viewBox="0 0 23 28"><defs><linearGradient id="nd" x1="0" y1="0" x2="1" y2="1"><stop offset="0" stop-color="#d4ecff"/><stop offset="1" stop-color="#a8d0f4"/></linearGradient></defs><path d="M0.5 0.5 L16 0.5 L22.5 7 L22.5 27.5 L0.5 27.5 Z" fill="url(#nd)" stroke="#88b8e0" stroke-width="0.8"/><path d="M16 0.5 L16 7 L22.5 7 Z" fill="#f4faff"/></svg>
<svg style="left:51px;top:45px" width="30" height="30" viewBox="0 0 30 30"><path d="M8 8 Q16 0 24 4 L24 0 L29 6 L23 11 L23 7 Q16 4 11 10 Z" fill="#58c828"/><path d="M3 11 L12 9 L20 10 L20 22 L5 22 Z" fill="#e8eef4" stroke="#b0b8c0" stroke-width="0.5"/><path d="M1 12 L3 28 L26 28 L29 12 L13 12 L11 14 L1 14 Z" fill="#f0b838"/><path d="M1 14 L11 14 L13 12 L29 12 L26 28 L3 28 Z" fill="#f4c048"/><path d="M3 28 L26 28" stroke="#c08010" stroke-width="1"/><ellipse cx="15" cy="29" rx="13" ry="1" fill="#111" opacity=".5"/></svg>
<svg style="left:91px;top:47px" width="24" height="28" viewBox="0 0 24 28"><path d="M1 2 L20 0 L23 3 L23 24 L2 28 Z" fill="#2e6ea8"/><path d="M1 2 L20 0 L20 2 L3 4 L3 26 L2 28 Z" fill="#5a98d0"/><path d="M7 3 L18 2 L18 11 L7 12 Z" fill="#f0f0f0"/><path d="M13 3 L16 2.6 L16 10 L13 10.4 Z" fill="#1e5a90"/><path d="M5 16 L20 14 L20 25 L5 27 Z" fill="#f4f4f4"/></svg>
<svg style="left:131px;top:47px" width="29" height="27" viewBox="0 0 29 27"><rect x="0.5" y="0.5" width="28" height="26" fill="#1e88d8"/><rect x="2" y="3" width="11" height="22" fill="#fff"/><rect x="15" y="3" width="12" height="22" fill="#e4e4e4"/><rect x="15" y="3" width="12" height="6" fill="#f8f8f8"/><g fill="#1e88d8"><rect x="3" y="5" width="2" height="2"/><rect x="5" y="8" width="2" height="2"/><rect x="7" y="11" width="2" height="2"/><rect x="3" y="15" width="2" height="2"/><rect x="5" y="18" width="2" height="2"/><rect x="7" y="21" width="2" height="2"/></g><path d="M6 5.5h5M8 8.5h3M6 15.5h5M8 18.5h3" stroke="#888" stroke-width="0.8"/></svg>
<svg style="left:175px;top:48px" width="29" height="25" viewBox="0 0 29 25"><path d="M13 0 L21 0 L21 9 L13 9 Z" fill="#3a80d0"/><path d="M4 9 L22 7 L28 11 L28 19 L10 21 L4 16 Z" fill="#2a64b0"/><path d="M4 9 L22 7 L28 11 L10 13 Z" fill="#5aa0e8"/><path d="M22 12 L28 11 L28 19 L22 21 Z" fill="#d8d0c4"/><path d="M24 13 L27 12.5 L27 18 L24 19 Z" fill="#6a5a4a"/><path d="M0 20 L10 17 L16 22 L6 25 Z" fill="#c8ecf4" stroke="#fff" stroke-width="0.6"/></svg>
<svg style="left:211px;top:49px" width="29" height="25" viewBox="0 0 29 25"><path d="M13 0 L21 0 L21 9 L13 9 Z" fill="#3a80d0"/><path d="M4 9 L22 7 L28 11 L28 19 L10 21 L4 16 Z" fill="#2a64b0"/><path d="M4 9 L22 7 L28 11 L10 13 Z" fill="#5aa0e8"/><path d="M22 12 L28 11 L28 19 L22 21 Z" fill="#d8d0c4"/><path d="M24 13 L27 12.5 L27 18 L24 19 Z" fill="#6a5a4a"/><path d="M0 20 L10 17 L16 22 L6 25 Z" fill="#c8ecf4" stroke="#fff" stroke-width="0.6"/></svg>
<svg style="left:211px;top:47px" width="30" height="28" viewBox="0 0 30 28"><circle cx="9" cy="9" r="7.5" fill="#cfd8e8" fill-opacity=".7" stroke="#c06a30" stroke-width="1.6"/><path d="M5 7 Q9 4 13 8" stroke="#fff" stroke-width="2" fill="none"/><path d="M15 15 L24 26" stroke="#f08020" stroke-width="3.5" stroke-linecap="round"/></svg>
<svg style="left:262px;top:48px" width="25" height="26" viewBox="0 0 25 26"><path d="M3 3 L22 23 M22 3 L3 23" stroke="#7a7a7a" stroke-width="7" stroke-linecap="square"/><path d="M3 3 L22 23 M22 3 L3 23" stroke="#bdbdbd" stroke-width="5"/><path d="M4 2 L12 10" stroke="#d8d8d8" stroke-width="2"/></svg>
<svg style="left:297px;top:46px" width="30" height="30" viewBox="0 0 30 30"><path d="M2 9 L11 1 L11 6 Q27 6 27 17 Q27 24 18 27 Q23 22 22 17 Q20 12 11 13 L11 18 Z" fill="#3a98d8"/><path d="M4 9 L11 3 L11 7 Q25 7 26 16" stroke="#8ad0ff" stroke-width="1" fill="none"/><ellipse cx="18" cy="28.5" rx="12" ry="1.2" fill="#888" opacity=".7"/></svg>
<svg style="left:335px;top:46px" width="30" height="30" viewBox="0 0 30 30"><path d="M28 9 L19 1 L19 6 Q3 6 3 17 Q3 24 12 27 Q7 22 8 17 Q10 12 19 13 L19 18 Z" fill="#b4b4b4"/><path d="M26 9 L19 3 L19 7 Q5 7 4 16" stroke="#e0e0e0" stroke-width="1" fill="none"/><ellipse cx="15" cy="28.5" rx="14" ry="1.2" fill="#999" opacity=".7"/></svg>
<svg style="left:371px;top:49px" width="30" height="23" viewBox="0 0 30 23"><rect x="0.5" y="0.5" width="28" height="7.5" fill="#f0c020" stroke="#c89010" stroke-width="0.8"/><path d="M3 8 L8 1 M9 8 L14 1 M15 8 L20 1 M21 8 L26 1" stroke="#3a3a48" stroke-width="2.6"/><rect x="2" y="9" width="3" height="13" fill="#d8d8d8"/><rect x="23" y="9" width="3" height="13" fill="#d8d8d8"/><rect x="5" y="14" width="18" height="2.5" fill="#c8c8c8"/></svg>
<svg style="left:420px;top:47px" width="30" height="28" viewBox="0 0 30 28"><path d="M1 2 L1 26 L28 26 Z" fill="none" stroke="#e8e8e8" stroke-width="3.5"/><path d="M7 22 L18 5" stroke="#777" stroke-width="1"/><path d="M3 16 L20 4" stroke="#999" stroke-width="1"/><path d="M18 3 L20 1 L21 5 Z" fill="#2a70c0"/><path d="M18 26 L26 1" stroke="#e8a820" stroke-width="2.4"/><path d="M25.5 1 L26.5 0" stroke="#d05020" stroke-width="2"/></svg>
<svg style="left:462px;top:47px" width="18" height="27" viewBox="0 0 18 27"><rect x="0.5" y="0.5" width="17" height="26" rx="2" fill="#5a8ad8" stroke="#3a5aa8" stroke-width="0.6"/><rect x="2" y="2" width="14" height="6" fill="#3a78d0"/><g fill="#a8d0ff"><rect x="2" y="10" width="3" height="3"/><rect x="6" y="10" width="3" height="3"/><rect x="2" y="14" width="3" height="3"/><rect x="6" y="14" width="3" height="3"/><rect x="10" y="14" width="3" height="3"/><rect x="2" y="18" width="3" height="3"/><rect x="6" y="18" width="3" height="3"/><rect x="10" y="18" width="3" height="3"/><rect x="2" y="22" width="3" height="3"/><rect x="6" y="22" width="3" height="3"/><rect x="10" y="22" width="3" height="3"/></g><rect x="10" y="10" width="4" height="3" fill="#f07030"/></svg>
<svg style="left:495px;top:47px" width="28" height="28" viewBox="0 0 28 28"><defs><radialGradient id="gf"><stop offset=".45" stop-color="#fff"/><stop offset="1" stop-color="#fff" stop-opacity="0"/></radialGradient><mask id="gm"><rect width="28" height="28" fill="url(#gf)"/></mask></defs><g stroke="#9a9a9a" stroke-width="1.1" opacity=".75" mask="url(#gm)"><path d="M6 1v26M11 1v26M16 1v26M21 1v26M1 6h26M1 11h26M1 16h26M1 21h26"/></g></svg>
<svg style="left:534px;top:45px" width="25" height="30" viewBox="0 0 25 30"><path d="M0 0 L24 0 L24 8 L8 8 L8 24 L0 24 Z" fill="#f0b828" stroke="#c89010" stroke-width="0.5"/><path d="M11 0v4M14 0v3M17 0v4M20 0v3M0 11h4M0 14h3M0 17h4M0 20h3" stroke="#906010" stroke-width="0.6"/><rect x="0" y="24" width="8" height="6" fill="#f0b828" opacity=".25"/></svg>
<svg style="left:577px;top:50px" width="22" height="22" viewBox="0 0 22 22"><path d="M10 1 Q20 1 20 9 Q20 14 15 13 Q12 13 12 16 Q12 20 8 20 Q1 20 1 11 Q1 1 10 1 Z" fill="#e0b820" stroke="#a08010" stroke-width="0.6"/><circle cx="6" cy="6" r="2.3" fill="#e03020"/><circle cx="11" cy="6" r="2" fill="#f050c0"/><rect x="8" y="10" width="11" height="11" fill="#fff" stroke="#111" stroke-width="1.4"/><path d="M10.5 19 L13.5 12 L16.5 19" stroke="#111" stroke-width="1.6" fill="none"/></svg>
<svg style="left:609px;top:59px" width="8" height="5" viewBox="0 0 8 5"><path d="M0 0 L7 0 L3.5 4 Z" fill="#222"/></svg>
<div class="a" style="left:1px;top:201px;width:40px;height:1px;background:#c8c8c8"></div>
<div class="a grip" style="left:3px;top:203px;width:37px;height:8px"></div>
<div class="a" style="left:1px;top:405px;width:40px;height:1px;background:#c8c8c8"></div>
<div class="a grip" style="left:3px;top:407px;width:37px;height:8px"></div>
<div class="a" style="left:6px;top:321px;width:31px;height:1px;background:#262626"></div>
<div class="a" style="left:6px;top:363px;width:31px;height:1px;background:#262626"></div>
<div class="a" style="left:6px;top:524px;width:31px;height:1px;background:#262626"></div>
<div class="a" style="left:47px;top:237px;width:31px;height:1px;background:#262626"></div>
<svg style="left:7px;top:93px" width="29" height="30" viewBox="0 0 29 30"><path d="M14 10 Q20 1 26 4 L26 0 L29 5 L24 8 L25 5.5 Q20 4 16 10 Z" fill="#4ab830"/><rect x="0.5" y="8.5" width="26" height="20" fill="#fff"/><rect x="2" y="10" width="23" height="17" fill="#f08a10"/><rect x="2" y="10" width="23" height="5" fill="#f8b020"/><circle cx="8" cy="15" r="3" fill="#ffe070"/><rect x="2" y="19" width="23" height="8" fill="#1a1a1a"/><rect x="6" y="20" width="3" height="6" fill="#a88a30" opacity=".7"/></svg>
<svg style="left:6px;top:128px" width="31" height="32" viewBox="0 0 31 32"><path d="M14 8 Q20 1 26 4 L26 0 L30 5 L25 9 L25 6 Q20 4 16 9 Z" fill="#4ab830"/><g stroke="#222" stroke-width="0.3"><rect x="9" y="2" width="6" height="8" fill="#f4f4f4"/><rect x="1" y="10" width="8" height="8" fill="#f07010"/><rect x="9" y="10" width="6" height="8" fill="#30c030"/><rect x="15" y="10" width="8" height="8" fill="#e82020"/><rect x="23" y="10" width="7" height="8" fill="#f0e020"/><rect x="9" y="18" width="6" height="10" fill="#2a70e0"/></g></svg>
<svg style="left:5px;top:163px" width="32" height="33" viewBox="0 0 32 33"><path d="M18 8 Q23 2 28 4 L28 1 L31 6 L27 10 L27 7 Q23 5 20 9 Z" fill="#4ab830"/><path d="M1 11 L13 6 L27 11 L15 17 Z" fill="#e82828"/><path d="M1 11 L15 17 L15 32 L2 26 Z" fill="#2040d8"/><path d="M15 17 L27 11 L27 25 L15 32 Z" fill="#f0d020"/><g stroke="#111" stroke-width="0.7" fill="none"><path d="M5 9.3 L19 15 M9 7.7 L23 13 M5 12.6 L17 7.3 M10 14.7 L22 9.3"/><path d="M5.6 13 L5.6 28 M10.3 15 L10.3 30 M1.5 16 L15 22 M1.7 21 L15 27"/><path d="M19 15 L19 30 M23 13 L23 28 M15 22 L27 16 M15 27 L27 21"/></g></svg>
<svg style="left:6px;top:214px" width="31" height="29" viewBox="0 0 31 29"><path d="M1 12 L17 1 L30 9 L14 20 Z" fill="#a8a8a8"/><path d="M1 12 L14 20 L14 28 L1 20 Z" fill="#888"/><path d="M14 20 L30 9 L30 17 L14 28 Z" fill="#6a6a6a"/></svg>
<svg style="left:6px;top:250px" width="30" height="28" viewBox="0 0 30 28"><rect x="0" y="8" width="9" height="11" fill="#f08020"/><rect x="20" y="8" width="9" height="11" fill="#f08020"/><path d="M10 1 L19 1 L19 22 L14.5 27 L10 22 Z" fill="#e0c030" stroke="#806010" stroke-width="0.6"/><path d="M10 6 L19 1 M10 13 L19 8 M10 20 L19 15" stroke="#8a6a10" stroke-width="2"/></svg>
<svg style="left:6px;top:285px" width="29" height="31" viewBox="0 0 29 31"><path d="M1 1 L17 0 L22 5 L22 29 L2 30 Z" fill="#f4eedc" stroke="#bbb" stroke-width="0.6"/><text x="2" y="10" font-family="Liberation Sans" font-size="6.5" font-weight="bold" fill="#222">N1</text><text x="2" y="18" font-family="Liberation Sans" font-size="6.5" font-weight="bold" fill="#222">N2</text><text x="2" y="26" font-family="Liberation Sans" font-size="6.5" font-weight="bold" fill="#222">N3..</text><circle cx="14" cy="12" r="5" fill="#f0b020" stroke="#c08010" stroke-width="1.6" stroke-dasharray="2 1"/><circle cx="22" cy="22" r="6" fill="#2a90e8" stroke="#1a60b0" stroke-width="2" stroke-dasharray="2 1.2"/><circle cx="22" cy="22" r="2" fill="#e0f0ff"/></svg>
<svg style="left:7px;top:327px" width="30" height="31" viewBox="0 0 30 31"><path d="M19 1 L13 16" stroke="#a87838" stroke-width="1.6"/><path d="M11 14 L16 17 L19 29 L1 30 Z" fill="#c8a060"/><path d="M4 29 L13 16 M8 29 L14 17 M12 29 L15 18" stroke="#8a6a38" stroke-width="0.6"/><path d="M15 12 L28 26 M28 12 L15 26" stroke="#e02020" stroke-width="4"/></svg>
<svg style="left:7px;top:369px" width="26" height="31" viewBox="0 0 27 32"><path d="M7 2 L20 0 L26 4 L26 27 L21 31 L6 31 L6 26 L19 26.5 L19 6 L7 6.5 Z" fill="#4caa4c" stroke="#246a24" stroke-width="0.8"/><path d="M21 2 L26 4 L26 27 L21 31 Z" fill="#7ccc6c" opacity=".8"/><path d="M7 6.5 L19 6 L19 26.5 L7 26 Z" fill="#262626"/><path d="M7 14 L18 13 L15.5 17 L15.5 26 L11.5 26 L11.5 17 Z" fill="#d8d8d8" stroke="#777" stroke-width="0.5"/><path d="M8 18 L11 18 M16 18 L18 18" stroke="#aaa" stroke-width="1"/><path d="M0.5 10 L8 3.5 L8 6.5 Q17 5.5 19 11 Q15 9 8 10.5 L8 14 Z" fill="#f4a818" stroke="#b87008" stroke-width="0.5"/></svg>
<svg style="left:5px;top:416px" width="32" height="31" viewBox="0 0 32 31"><path d="M17 5 L26 0 M24 14 L31 9" stroke="#2aa0e8" stroke-width="2.2"/><path d="M17 6 L25 14" stroke="#111" stroke-width="3"/><path d="M20 4 L29 11" stroke="#2aa0e8" stroke-width="0.8"/><path d="M14 20 Q14 28 22 28 Q30 28 30 20 Z" fill="#c86a20"/><path d="M8 14 L13 14 L13 19 L18 19 L18 24 L13 24 L13 29 L8 29 L8 24 L3 24 L3 19 L8 19 Z" fill="#3a90f0" stroke="#1a60c0" stroke-width="0.6"/><path d="M26 28 L30 28 L28 30 Z" fill="#ddd"/></svg>
<svg style="left:5px;top:452px" width="32" height="30" viewBox="0 0 32 30"><circle cx="16" cy="14" r="11" fill="none" stroke="#4a8ad8" stroke-width="1.8"/><path d="M16 0 V29 M2 14 H30" stroke="#4a8ad8" stroke-width="1.8"/><path d="M1 11 L13 11 Q13 19 7 19 Q2 19 1 11 Z M19 11 L31 11 Q30 19 25 19 Q19 19 19 11 Z" fill="none" stroke="#f08020" stroke-width="2.2"/></svg>
<svg style="left:6px;top:491px" width="31" height="27" viewBox="0 0 31 27"><path d="M3 1 L25 1 L30 26 L1 26 L0 21 Z" fill="#e8e8e8" stroke="#999" stroke-width="0.6"/><path d="M1 21 L6 26 L1 26 Z" fill="#bbb"/><path d="M6 15 L10 6 L14 13" stroke="#f08020" stroke-width="1.2" fill="none"/><path d="M12 14 Q10 18 14 20" stroke="#f0c080" stroke-width="1" fill="none"/><rect x="13" y="12" width="14" height="3" fill="#3a90e8"/><circle cx="20" cy="9" r="2" fill="#3a90e8"/><circle cx="20" cy="18.5" r="2" fill="#3a90e8"/></svg>
<svg style="left:9px;top:530px" width="27" height="32" viewBox="0 0 27 32"><rect x="8" y="0" width="4" height="32" fill="#8a5a28"/><path d="M2 14 L10 16 L9 25 L4 23 Z" fill="#e8a860" stroke="#111" stroke-width="1"/><path d="M17 5 A5 5 0 1 1 16 12" stroke="#e02020" stroke-width="2.6" fill="none"/><path d="M15 3 L19 6 L15 8 Z M18 14 L14 12 L17 10 Z" fill="#e02020"/></svg>
<svg style="left:47px;top:93px" width="30" height="32" viewBox="0 0 30 32"><path d="M7 8 Q13 4 19 6 Q18 14 11 19 Q15 23 23 20" stroke="#000" stroke-width="3" fill="none" opacity=".6"/><path d="M7 8 Q13 4 19 6 Q18 14 11 19 Q15 23 23 20" stroke="#d8d8d8" stroke-width="1.2" fill="none"/><circle cx="7" cy="8" r="3.6" fill="#f07a00"/><circle cx="6" cy="7" r="1.8" fill="#ffd060"/><circle cx="19" cy="6" r="3.6" fill="#f07a00"/><circle cx="18" cy="5" r="1.8" fill="#ffd060"/><circle cx="11" cy="19" r="3.6" fill="#f07a00"/><circle cx="10" cy="18" r="1.8" fill="#ffd060"/><circle cx="23" cy="20" r="3.6" fill="#f07a00"/><circle cx="22" cy="19" r="1.8" fill="#ffd060"/></svg>
<svg style="left:47px;top:131px" width="28" height="26" viewBox="0 0 28 26"><path d="M5 21 L23 5" stroke="#e8e8e8" stroke-width="1.8"/><circle cx="5" cy="21" r="3.6" fill="#f07a00"/><circle cx="4" cy="20" r="1.8" fill="#ffd060"/><circle cx="23" cy="5" r="3.6" fill="#f07a00"/><circle cx="22" cy="4" r="1.8" fill="#ffd060"/></svg>
<svg style="left:47px;top:165px" width="31" height="31" viewBox="0 0 31 31"><path d="M5 5 Q6 22 25 24" stroke="#f0f0f0" stroke-width="2" fill="none"/><path d="M2 25 H30" stroke="#ddd" stroke-width="1" stroke-dasharray="2 2"/><path d="M5 8 V25" stroke="#ddd" stroke-width="1" stroke-dasharray="2 2"/><path d="M3 25 H8 M5.5 22.5 V28" stroke="#fff" stroke-width="1.6"/><circle cx="5" cy="5" r="3.6" fill="#f07a00"/><circle cx="4" cy="4" r="1.8" fill="#ffd060"/><circle cx="25" cy="24" r="3.6" fill="#f07a00"/><circle cx="24" cy="23" r="1.8" fill="#ffd060"/></svg>
<svg style="left:47px;top:203px" width="29" height="27" viewBox="0 0 29 27"><path d="M5 22 L24 5" stroke="#e8e8e8" stroke-width="1.6" stroke-dasharray="4 2"/><circle cx="5" cy="22" r="3.6" fill="#f07a00"/><circle cx="4" cy="21" r="1.8" fill="#ffd060"/><circle cx="24" cy="5" r="3.6" fill="#f07a00"/><circle cx="23" cy="4" r="1.8" fill="#ffd060"/></svg>
<svg style="left:46px;top:244px" width="29" height="28" viewBox="0 0 29 28"><path d="M2 2 L26 26" stroke="#f0e0d0" stroke-width="3"/><path d="M2 2 L26 26" stroke="#c06030" stroke-width="1" opacity=".6"/><path d="M14 2 L20 2 L20 8 M20 2 L14 8" stroke="#f09050" stroke-width="1.8" fill="none"/><path d="M8 20 L8 26 L14 26 M8 26 L14 20" stroke="#f09050" stroke-width="1.8" fill="none"/></svg>
<svg style="left:0;top:0" width="1600" height="999">
<defs><linearGradient id="wall" gradientUnits="userSpaceOnUse" x1="840" y1="0" x2="1590" y2="0"><stop offset="0" stop-color="#6a4d17"/><stop offset="0.45" stop-color="#6d5018"/><stop offset="0.52" stop-color="#7e5c18"/><stop offset="0.58" stop-color="#6a4d16"/><stop offset="0.82" stop-color="#5e4515"/><stop offset="0.873" stop-color="#2a2418"/><stop offset="0.905" stop-color="#c89018"/><stop offset="0.935" stop-color="#ffb420"/><stop offset="1" stop-color="#ffb020"/></linearGradient></defs>
<path d="M843,773 C863.5,757.5 923.2,712.5 966,680 C1008.8,647.5 1055.7,610.0 1100,578 C1144.3,546.0 1198.7,510.0 1232,488 C1265.3,466.0 1272.0,464.7 1300,446 C1328.0,427.3 1373.3,394.7 1400,376 C1426.7,357.3 1446.7,344.7 1460,334 C1473.3,323.3 1475.0,318.7 1480,312 C1485.0,305.3 1486.7,300.3 1490,294 C1493.3,287.7 1496.7,279.3 1500,274 C1503.3,268.7 1507.0,264.8 1510,262 C1513.0,259.2 1514.7,258.3 1518,257 C1521.3,255.7 1525.5,254.5 1530,254 C1534.5,253.5 1539.2,253.3 1545,254 C1550.8,254.7 1559.0,255.5 1565,258 C1571.0,260.5 1578.3,267.2 1581,269 L1581,269 L1581,276 C1579.5,277.7 1575.5,282.7 1572,286 C1568.5,289.3 1565.3,292.7 1560,296 C1554.7,299.3 1550.0,300.8 1540,306 C1530.0,311.2 1520.0,313.5 1500,327 C1480.0,340.5 1446.7,367.5 1420,387 C1393.3,406.5 1364.0,425.8 1340,444 C1316.0,462.2 1310.5,470.0 1276,496 C1241.5,522.0 1168.0,574.3 1133,600 C1098.0,625.7 1097.3,627.8 1066,650 C1034.7,672.2 965.2,719.2 945,733 L900,762 L862,766 L845,775 Z" fill="#58595e" stroke="#1e1e22" stroke-width="1" stroke-linejoin="round"/>
<path d="M841,739 C867.5,719.5 948.5,659.8 1000,622 C1051.5,584.2 1111.7,539.0 1150,512 C1188.3,485.0 1205.0,476.0 1230,460 C1255.0,444.0 1271.7,435.2 1300,416 C1328.3,396.8 1373.3,364.0 1400,345 C1426.7,326.0 1446.7,312.2 1460,302 C1473.3,291.8 1474.7,289.7 1480,284 C1485.3,278.3 1487.8,274.5 1492,268 C1496.2,261.5 1501.2,251.5 1505,245 C1508.8,238.5 1511.2,232.7 1515,229 C1518.8,225.3 1523.0,224.2 1528,223 C1533.0,221.8 1538.8,221.3 1545,222 C1551.2,222.7 1558.8,224.3 1565,227 C1571.2,229.7 1579.2,236.2 1582,238 L1581,269 L1565,258 C1561.7,257.3 1550.8,254.7 1545,254 C1539.2,253.3 1534.5,253.5 1530,254 C1525.5,254.5 1521.3,255.7 1518,257 C1514.7,258.3 1513.0,259.2 1510,262 C1507.0,264.8 1503.3,268.7 1500,274 C1496.7,279.3 1493.3,287.7 1490,294 C1486.7,300.3 1485.0,305.3 1480,312 C1475.0,318.7 1473.3,323.3 1460,334 C1446.7,344.7 1426.7,357.3 1400,376 C1373.3,394.7 1328.0,427.3 1300,446 C1272.0,464.7 1265.3,466.0 1232,488 C1198.7,510.0 1144.3,546.0 1100,578 C1055.7,610.0 1008.8,647.5 966,680 C923.2,712.5 863.5,757.5 843,773 Z" fill="url(#wall)" stroke="#1e1e1e" stroke-width="1" stroke-linejoin="round"/>
<path d="M1565,227 Q1575,231 1582,238 L1581,269 Q1573,262 1565,258 Z" fill="#1a88f0" stroke="#1e1e1e" stroke-width="1"/>
<polygon points="861,764 890,744 906,750 906,775 878,787 872,783 872,768" fill="#55565c" stroke="#222" stroke-width="0.8" stroke-linejoin="round"/>
<path d="M888,746 Q896,738 905,741 L911,752 Q910,766 904,771 Q896,775 888,767 Q884,756 888,746 Z" fill="#62636a" stroke="#222" stroke-width="0.8"/>
<ellipse cx="895.5" cy="755" rx="3.2" ry="4.6" fill="#ececf4" stroke="#333" stroke-width="0.6"/>
<path d="M916,722 L938,728 L941,733 L941,746 L931,769 Q926,780 918,779 L908,773 Q904,768 906,760 L915,738 Z" fill="#d6d6de" stroke="#2a2a2a" stroke-width="0.8" stroke-linejoin="round"/>
<path d="M916,722 L938,728 L941,733 L936,737 L916,731 Z" fill="#ececf2" stroke="#444" stroke-width="0.5"/>
<polygon points="919,744 929,747 923,767 915,765" fill="#5a5b62" stroke="#333" stroke-width="0.5"/>
<ellipse cx="913.5" cy="762" rx="2.8" ry="3.8" fill="#f4f4fa" stroke="#444" stroke-width="0.6"/>
</svg>
<div id="status" class="a"></div>
<div class="t" style="left:2px;top:983px;color:#d0d0d0;letter-spacing:-0.3px">Prêt</div>
<div class="a" style="left:23px;top:979px;width:1px;height:18px;background:#d0d0d0"></div>
<div class="a" style="left:1347px;top:982px;width:112px;height:15px;border-radius:3px;background:linear-gradient(#5a5a5a,#4a4a4a);border:1px solid #222"></div>
<div class="t" style="left:1351px;top:984px;color:#333;font-style:italic;letter-spacing:-0.3px">Recherche</div>
<svg style="left:1445px;top:983px" width="13" height="13" viewBox="0 0 13 13"><circle cx="8" cy="5" r="4" fill="#c8e8ff" stroke="#4a9ad8" stroke-width="1.2"/><path d="M5 8 L1 12" stroke="#ddd" stroke-width="2"/></svg>
<div class="a" style="left:1461px;top:980px;width:1px;height:18px;background:#d8d8d8"></div>
<div class="a" style="left:1466px;top:981px;width:132px;height:16px;border-radius:4px;border:2px solid #6a6a6a;background:#2a2a2a"></div></body></html>
